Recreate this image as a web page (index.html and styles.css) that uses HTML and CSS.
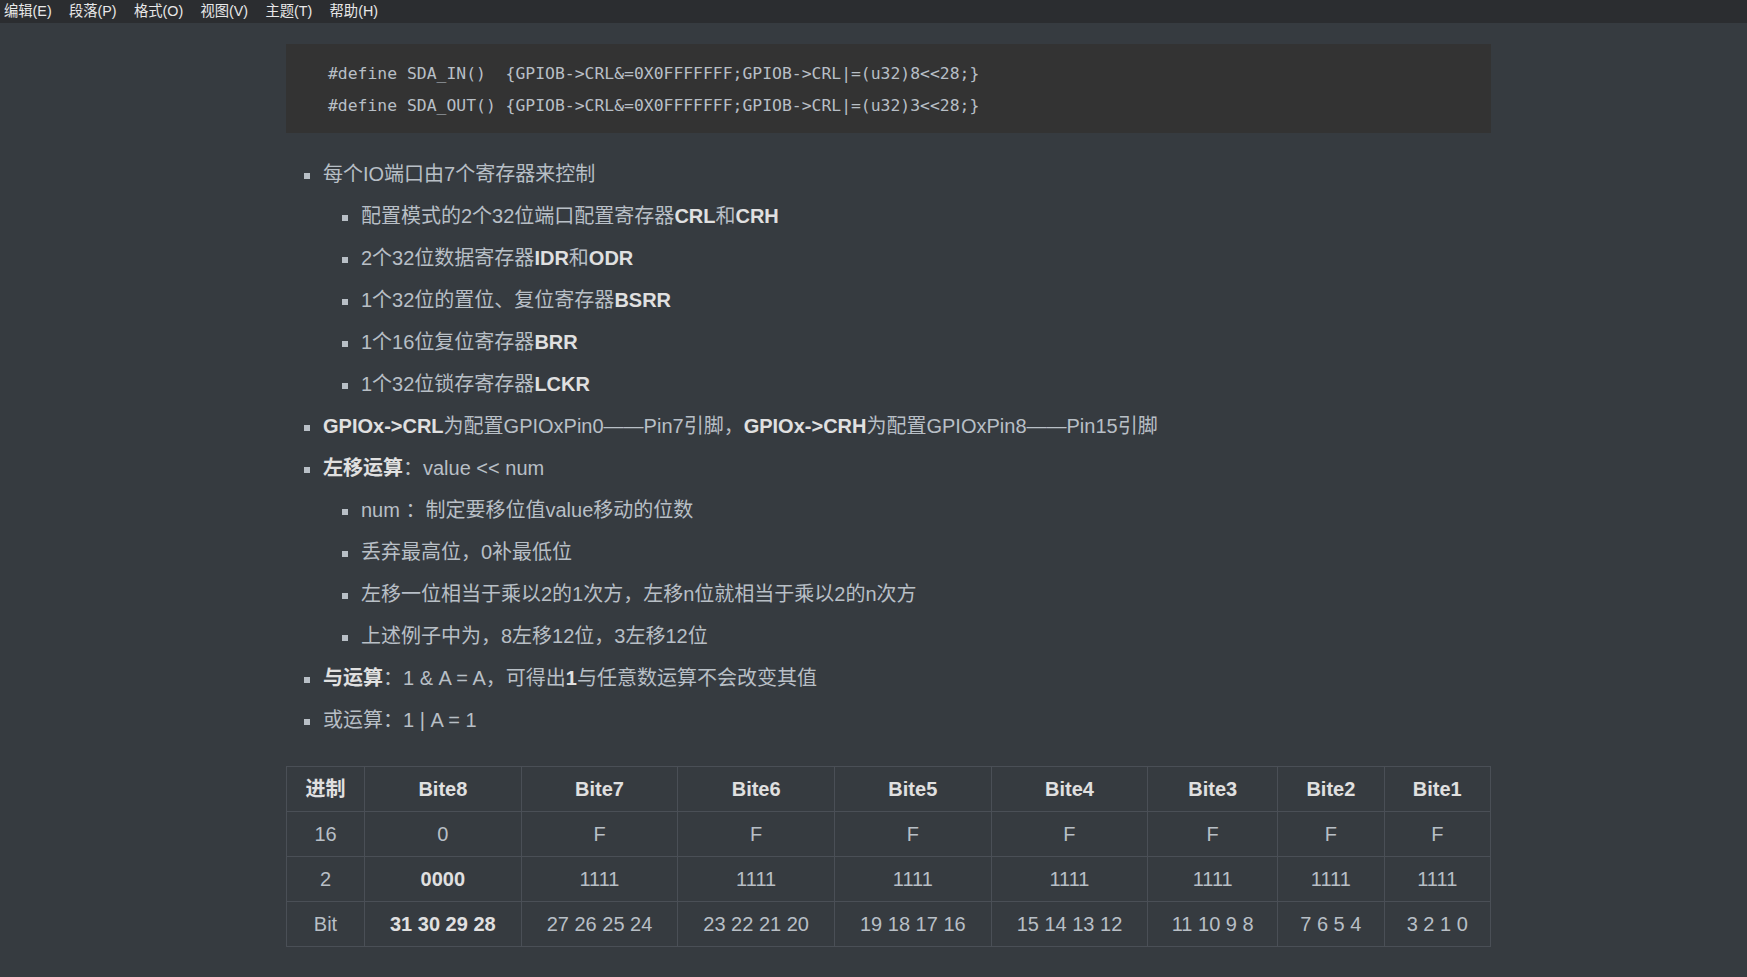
FILE: index.html
```html
<!DOCTYPE html>
<html lang="zh-CN">
<head>
<meta charset="utf-8">
<title>GPIO</title>
<link rel="stylesheet" href="styles.css">
</head>
<body>
<div class="menubar">
  <span class="menu-item">编辑(E)</span>
  <span class="menu-item">段落(P)</span>
  <span class="menu-item">格式(O)</span>
  <span class="menu-item">视图(V)</span>
  <span class="menu-item">主题(T)</span>
  <span class="menu-item">帮助(H)</span>
</div>
<div class="write">
  <pre class="code">#define SDA_IN()  {GPIOB-&gt;CRL&amp;=0X0FFFFFFF;GPIOB-&gt;CRL|=(u32)8&lt;&lt;28;}
#define SDA_OUT() {GPIOB-&gt;CRL&amp;=0X0FFFFFFF;GPIOB-&gt;CRL|=(u32)3&lt;&lt;28;}</pre>
  <ul class="list">
    <li>每个IO端口由7个寄存器来控制
      <ul class="sub">
        <li>配置模式的2个32位端口配置寄存器<b>CRL</b>和<b>CRH</b></li>
        <li>2个32位数据寄存器<b>IDR</b>和<b>ODR</b></li>
        <li>1个32位的置位、复位寄存器<b>BSRR</b></li>
        <li>1个16位复位寄存器<b>BRR</b></li>
        <li>1个32位锁存寄存器<b>LCKR</b></li>
      </ul>
    </li>
    <li><b>GPIOx-&gt;CRL</b>为配置GPIOxPin0——Pin7引脚，<b>GPIOx-&gt;CRH</b>为配置GPIOxPin8——Pin15引脚</li>
    <li><b>左移运算</b>：value &lt;&lt; num
      <ul class="sub">
        <li>num ：制定要移位值value移动的位数</li>
        <li>丢弃最高位，0补最低位</li>
        <li>左移一位相当于乘以2的1次方，左移n位就相当于乘以2的n次方</li>
        <li>上述例子中为，8左移12位，3左移12位</li>
      </ul>
    </li>
    <li><b>与运算</b>：1 &amp; A = A，可得出<b>1</b>与任意数运算不会改变其值</li>
    <li>或运算：1 | A = 1</li>
  </ul>
  <table class="bits">
    <thead>
      <tr><th class="col-radix">进制</th><th>Bite8</th><th>Bite7</th><th>Bite6</th><th>Bite5</th><th>Bite4</th><th>Bite3</th><th>Bite2</th><th>Bite1</th></tr>
    </thead>
    <tbody>
      <tr><td>16</td><td>0</td><td>F</td><td>F</td><td>F</td><td>F</td><td>F</td><td>F</td><td>F</td></tr>
      <tr><td>2</td><td><b>0000</b></td><td>1111</td><td>1111</td><td>1111</td><td>1111</td><td>1111</td><td>1111</td><td>1111</td></tr>
      <tr><td>Bit</td><td><b>31 30 29 28</b></td><td>27 26 25 24</td><td>23 22 21 20</td><td>19 18 17 16</td><td>15 14 13 12</td><td>11 10 9 8</td><td>7 6 5 4</td><td>3 2 1 0</td></tr>
    </tbody>
  </table>
</div>
</body>
</html>
```

FILE: styles.css
```css
html, body {
  margin: 0;
  padding: 0;
  background: #363b40;
}
body {
  font-family: "Liberation Sans", Arial, "Noto Sans CJK SC", sans-serif;
  color: #b8bfc6;
  font-size: 20px;
}
.menubar {
  height: 23px;
  background: #2b2d30;
  display: flex;
  align-items: center;
  padding-left: 4px;
  font-family: "Liberation Sans", "Noto Sans CJK SC", sans-serif;
  font-size: 14.3px;
  line-height: 23px;
  color: #e8e8e8;
}
.menu-item {
  margin-right: 17.3px;
}
.write {
  width: 1205px;
  margin-left: 286px;
  padding-top: 21px;
}
.code {
  margin: 0;
  background: #333333;
  padding: 14px 42px 11px 42px;
  font-family: "DejaVu Sans Mono", "Liberation Mono", monospace;
  font-size: 16.4px;
  line-height: 32px;
  color: #b8bfc6;
  white-space: pre;
}
.list {
  list-style: none;
  margin: 15px 0 30px 0;
  padding-left: 37px;
}
.sub {
  list-style: none;
  margin: 0;
  padding-left: 38px;
}
.list li {
  padding-top: 10px;
  line-height: 32px;
}
.list li::before {
  content: "";
  display: inline-block;
  width: 6px;
  height: 6px;
  background: #b8bfc6;
  margin-left: -19px;
  margin-right: 13px;
  vertical-align: middle;
}
b {
  color: #e0e0e0;
  font-weight: bold;
}
.bits {
  width: 100%;
  border-collapse: collapse;
  margin: 0;
}
.bits th,
.bits td {
  border: 1px solid #4a4f56;
  padding: 6px 16px;
  line-height: 32px;
  text-align: center;
  font-size: 20px;
}
.bits th.col-radix {
  width: 45px;
}
.bits th {
  color: #e0e0e0;
  font-weight: bold;
}
.bits td {
  color: #b8bfc6;
}
```
